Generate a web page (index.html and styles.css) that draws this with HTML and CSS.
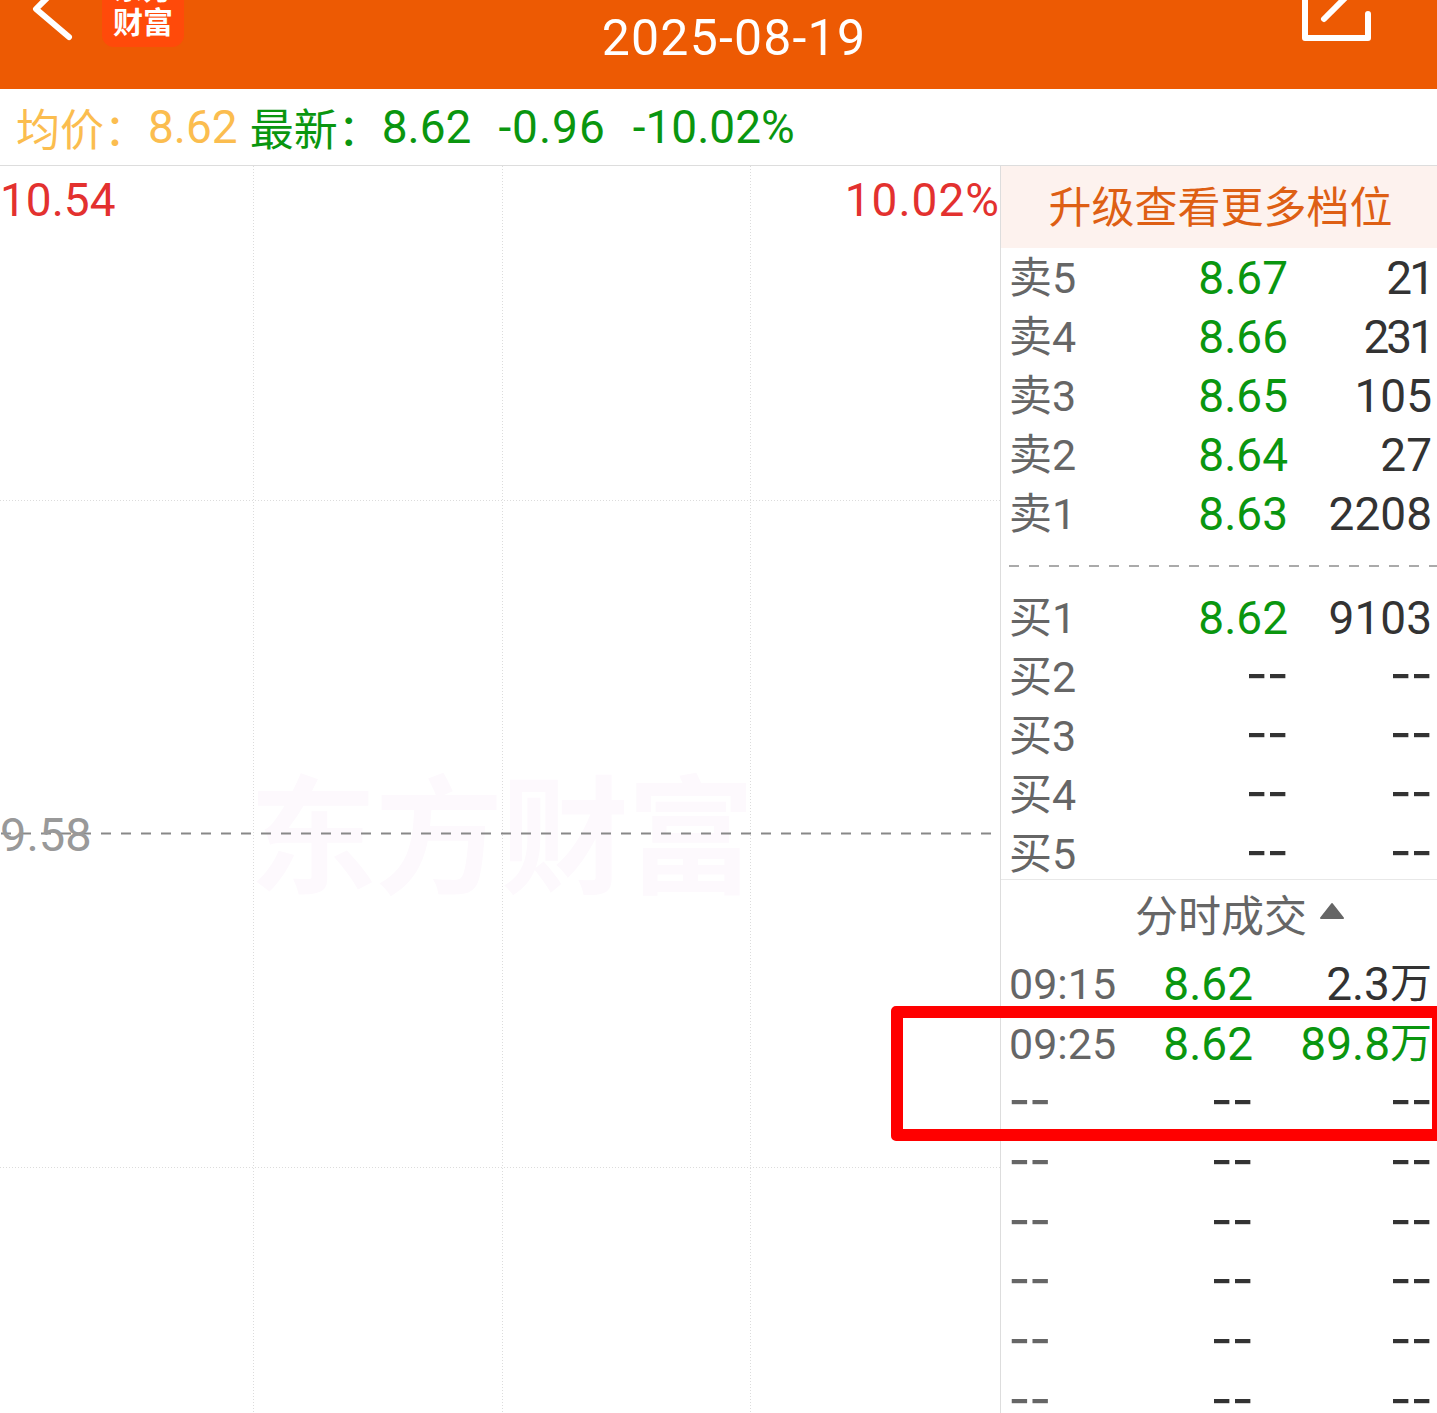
FILE: index.html
```html
<!DOCTYPE html>
<html lang="zh-CN">
<head>
<meta charset="utf-8">
<title>2025-08-19</title>
<link rel="stylesheet" href="styles.css">
</head>
<body>
<div class="page">
  <header class="topbar">
    <svg class="back" viewBox="0 0 46 45"><path d="M24 -9 L6 9 L39 37"/></svg>
    <div class="logo">东方<br>财富</div>
    <div class="title">2025-08-19</div>
    <svg class="share" viewBox="0 0 76 45"><path d="M5 -12 V38 H68 V14"/><path d="M24 19 L48 -5"/></svg>
  </header>
  <div class="quote">
    <span class="avg cjk">均价：</span><span class="avg v1">8.62</span>
    <span class="up cjk">最新：</span><span class="up">8.62</span><span class="up v2 wide">-0.96</span><span class="up v2">-10.02%</span>
  </div>
  <main class="body">
    <section class="chart">
      <div class="watermark">东方财富</div>
      <svg class="grid" viewBox="0 0 1000 1247" preserveAspectRatio="none">
        <path class="dot" d="M253.5 0V1247M502.5 0V1247M750.5 0V1247M0 334.5H1000M0 1001.5H1000"/>
        <path class="mid" d="M1 667.5H992"/>
      </svg>
      <div class="scale-top"><span>10.54</span><span class="pct">10.02%</span></div>
      <div class="pre">9.58</div>
    </section>
    <aside class="side">
      <div class="upgrade">升级查看更多档位</div>
      <div class="book sell">
        <div class="row"><span class="lab">卖5</span><span class="up">8.67</span><span class="dark one">21</span></div>
        <div class="row"><span class="lab">卖4</span><span class="up">8.66</span><span class="dark one">231</span></div>
        <div class="row"><span class="lab">卖3</span><span class="up">8.65</span><span class="dark">105</span></div>
        <div class="row"><span class="lab">卖2</span><span class="up">8.64</span><span class="dark">27</span></div>
        <div class="row"><span class="lab">卖1</span><span class="up">8.63</span><span class="dark">2208</span></div>
      </div>
      <div class="split"></div>
      <div class="book buy">
        <div class="row"><span class="lab">买1</span><span class="up">8.62</span><span class="dark">9103</span></div>
        <div class="row"><span class="lab">买2</span><span class="dash">--</span><span class="dash">--</span></div>
        <div class="row"><span class="lab">买3</span><span class="dash">--</span><span class="dash">--</span></div>
        <div class="row"><span class="lab">买4</span><span class="dash">--</span><span class="dash">--</span></div>
        <div class="row"><span class="lab">买5</span><span class="dash">--</span><span class="dash">--</span></div>
      </div>
      <div class="ticks-head"><span>分时成交</span><svg class="tri" viewBox="0 0 26 18"><path d="M13 2 L24 16 H2 Z"/></svg></div>
      <div class="ticks">
        <div class="row tick"><span class="lab">09:15</span><span class="up">8.62</span><span class="dark">2.3<small class="wan">万</small></span></div>
        <div class="row tick"><span class="lab">09:25</span><span class="up">8.62</span><span class="up">89.8<small class="wan">万</small></span></div>
        <div class="row tick"><span class="dash lab2">--</span><span class="dash">--</span><span class="dash">--</span></div>
        <div class="row tick"><span class="dash lab2">--</span><span class="dash">--</span><span class="dash">--</span></div>
        <div class="row tick"><span class="dash lab2">--</span><span class="dash">--</span><span class="dash">--</span></div>
        <div class="row tick"><span class="dash lab2">--</span><span class="dash">--</span><span class="dash">--</span></div>
        <div class="row tick"><span class="dash lab2">--</span><span class="dash">--</span><span class="dash">--</span></div>
        <div class="row tick"><span class="dash lab2">--</span><span class="dash">--</span><span class="dash">--</span></div>
      </div>
    </aside>
  </main>
  <div class="mark"></div>
</div>
</body>
</html>
```
FILE: styles.css
```css
* { box-sizing: border-box; }
html, body { margin: 0; padding: 0; background: #fff; }
body { font-family: Roboto, "Noto Sans CJK SC", sans-serif; font-size: 46px; overflow: hidden; }
.page { position: relative; width: 1437px; height: 1413px; overflow: hidden; }

.topbar { height: 89px; background: #ed5a03; display: flex; align-items: flex-start; padding: 0 61px 0 30px; overflow: hidden; color: #fff; }
.back { width: 46px; height: 45px; flex: none; }
.back path, .share path { fill: none; stroke: #fff; stroke-linecap: round; stroke-linejoin: round; stroke-width: 6px; }
.logo { flex: none; width: 82px; height: 83px; margin: -36px 0 0 26px; background: #ff4a0a; border-radius: 12px; font-family: "Noto Sans CJK SC", sans-serif; font-weight: 700; font-size: 30px; line-height: 34px; text-align: center; padding-top: 5px; }
.title { flex: 1; text-align: center; padding: 7px 16px 0 0; font-size: 50px; line-height: 62px; letter-spacing: 1.2px; }
.share { width: 76px; height: 45px; flex: none; }

.quote { height: 77px; border-bottom: 1px solid #ddd; padding-left: 16px; display: flex; align-items: center; line-height: 76px; white-space: nowrap; }
.cjk { font-size: 44px; font-family: "Noto Sans CJK SC", sans-serif; }
.avg { color: #fbbd4f; }
.up { color: #0a960f; }
.v1 { margin-right: 12px; }
.v2 { margin-left: 27px; }
.wide { letter-spacing: 1px; }

.body { display: flex; height: 1247px; }
.chart { position: relative; width: 1000px; flex: none; }
.grid { position: absolute; inset: 0; width: 1000px; height: 1247px; }
.dot { fill: none; stroke: #dcdcdc; stroke-width: 1; stroke-dasharray: 1 2; }
.mid { fill: none; stroke: #888; stroke-width: 2; stroke-dasharray: 10 10; }
.watermark { position: absolute; left: 249px; top: 578px; font-family: "Noto Sans CJK SC", sans-serif; font-weight: 700; font-size: 128px; line-height: 170px; letter-spacing: -2px; color: #fdf9fd; white-space: nowrap; }
.scale-top { position: relative; display: flex; justify-content: space-between; color: #e3312f; line-height: 68px; }
.pct { letter-spacing: 1px; }
.pre { position: absolute; left: 0; top: 635px; color: #999; font-size: 47px; line-height: 68px; }

.side { flex: 1; border-left: 1px solid #ddd; min-width: 0; }
.upgrade { height: 82px; background: #fdf2ee; color: #de5f14; font-family: "Noto Sans CJK SC", sans-serif; font-size: 43px; line-height: 76px; text-align: center; padding-left: 3px; }
.book { padding: 0 5px 0 8px; }
.sell { padding-top: 1px; }
.row { display: grid; grid-template-columns: minmax(0, 1fr) auto 144px; height: 59px; line-height: 59px; white-space: nowrap; }
.row span:nth-child(n+2) { text-align: right; }
.lab { color: #666; font-size: 43px; }
.dark { color: #333; }
.one { letter-spacing: -3px; }
.wan { font-size: 42px; font-family: "Noto Sans CJK SC", sans-serif; line-height: 0; vertical-align: 2px; }
.dash { color: #333; font-family: "Noto Sans CJK SC", sans-serif; font-size: 60px; font-weight: 400; line-height: 37px; }
.dash.lab2 { color: #666; text-align: left; }
.split { height: 2px; margin: 21px 0 0 8px; background: repeating-linear-gradient(90deg, #aaa 0 10px, transparent 10px 20px); }
.buy { margin-top: 22px; height: 290px; }
.ticks-head { height: 72px; border-top: 1px solid #e8e8e8; background: #fff; display: flex; justify-content: center; align-items: center; gap: 12px; padding: 0 0 6px 42px; color: #666; font-size: 43px; font-family: "Noto Sans CJK SC", sans-serif; }
.tri { width: 26px; height: 18px; flex: none; margin-bottom: 4px; }
.tri path { fill: #666; stroke: #666; stroke-width: 2px; stroke-linejoin: round; }
.ticks { padding: 0 5px 0 8px; margin-top: 4px; }
.tick { grid-template-columns: minmax(0, 1fr) 145px 179px; height: 59.7px; line-height: 59.7px; }

.mark { position: absolute; left: 891px; top: 1006px; width: 553px; height: 135px; border: 12px solid #f00; border-radius: 5px; }
```
